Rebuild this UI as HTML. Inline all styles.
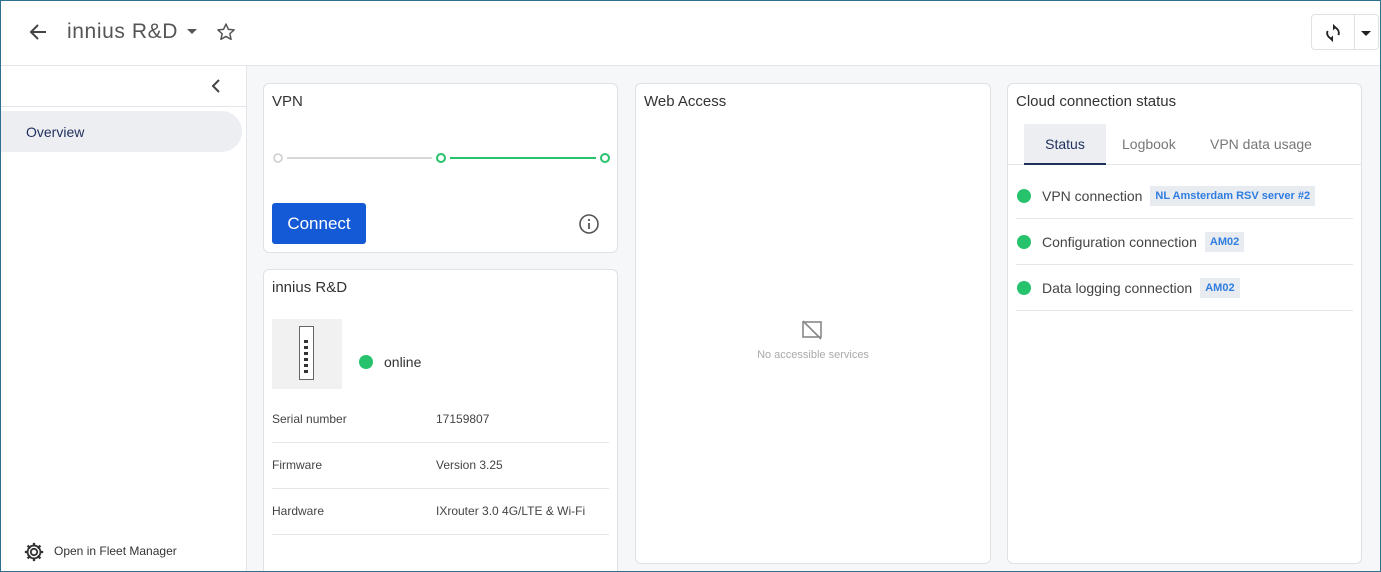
<!DOCTYPE html><html style="width:1381px;height:572px;overflow:hidden"><head><style>
*{box-sizing:border-box;margin:0;padding:0}
body{width:1381px;height:572px;overflow:hidden;font-family:"Liberation Sans",sans-serif;background:#fff;position:relative;color:#333}
.frame{position:absolute;inset:0;border:1px solid #2f6f8f;pointer-events:none;z-index:10}
.hdr{position:absolute;left:0;top:0;width:1381px;height:66px;border-bottom:1px solid #e3e5e8;background:#fff}
.side{position:absolute;left:0;top:66px;width:247px;height:506px;border-right:1px solid #e3e5e8;background:#fff}
.main{position:absolute;left:247px;top:66px;right:0;bottom:0;background:#f6f7f9}
.card{position:absolute;background:#fff;border:1px solid #dfe1e4;border-radius:6px}
.ct{position:absolute;left:8px;top:9px;font-size:15px;color:#333}
.row{position:absolute;left:8px;right:8px;height:46px;border-bottom:1px solid #e3e5e8;font-size:12px;color:#444}
.row span{position:absolute;top:8px}
.dot{display:inline-block;width:14px;height:14px;border-radius:50%;background:#27c26c}
.tag{background:#e8ebef;color:#2f7de1;font-size:11px;font-weight:bold;padding:4px 5px;margin-left:8px}
.srow{position:absolute;left:8px;right:8px;height:46px;border-bottom:1px solid #e3e5e8;display:flex;align-items:center;font-size:14px;color:#444}
</style></head><body>
<div class="hdr">
<svg style="position:absolute;left:28px;top:23px" width="20" height="18" viewBox="0 0 20 18"><path d="M18 9H3M10 2L3 9l7 7" stroke="#444" stroke-width="2" fill="none"/></svg>
<div style="position:absolute;left:67px;top:20px;font-size:21px;color:#555;letter-spacing:.6px">innius R&amp;D</div>
<svg style="position:absolute;left:187px;top:29px" width="10" height="6"><path d="M0 0h10L5 5z" fill="#555"/></svg>
<svg style="position:absolute;left:216px;top:22px" width="20" height="20" viewBox="0 0 24 24"><path d="M12 2.5l2.9 6.3 6.8.7-5.1 4.6 1.5 6.7L12 17.3l-6.1 3.5 1.5-6.7-5.1-4.6 6.8-.7z" stroke="#555" stroke-width="1.8" fill="none" stroke-linejoin="round"/></svg>
<div style="position:absolute;left:1311px;top:14px;width:68px;height:36px;border:1px solid #dfe1e4;border-radius:4px">
<div style="position:absolute;left:42px;top:0;bottom:0;border-left:1px solid #dfe1e4"></div>
<svg style="position:absolute;left:11px;top:8px" width="20" height="20" viewBox="0 0 24 24"><path d="M12 5a7 7 0 0 1 6.5 9.5M12 19a7 7 0 0 1-6.5-9.5" stroke="#222" stroke-width="2.2" fill="none"/><path d="M12 1l4 4-4 4zM12 23l-4-4 4-4z" fill="#222"/></svg>
<svg style="position:absolute;left:49px;top:16px" width="10" height="6"><path d="M0 0h10L5 5z" fill="#222"/></svg>
</div></div>
<div class="side">
<div style="position:absolute;left:0;right:0;top:0;height:41px;border-bottom:1px solid #e3e5e8"></div>
<svg style="position:absolute;left:211px;top:13px" width="10" height="14"><path d="M8 1L2 7l6 6" stroke="#444" stroke-width="2" fill="none"/></svg>
<div style="position:absolute;left:0;top:45px;width:242px;height:41px;background:#eceef2;border-radius:0 21px 21px 0"></div>
<div style="position:absolute;left:26px;top:58px;font-size:14px;color:#1f2f5c">Overview</div>
<svg style="position:absolute;left:23px;top:475px" width="22" height="22" viewBox="0 0 24 24"><circle cx="12" cy="12" r="3.5" stroke="#333" stroke-width="2" fill="none"/><path d="M12 2v4M12 18v4M2 12h4M18 12h4M5 5l3 3M16 16l3 3M19 5l-3 3M8 16l-3 3" stroke="#333" stroke-width="2.5"/><circle cx="12" cy="12" r="7" stroke="#333" stroke-width="2" fill="none"/></svg>
<div style="position:absolute;left:54px;top:478px;font-size:12px;color:#333">Open in Fleet Manager</div>
</div>
<div class="main"></div>
<div class="card" style="left:263px;top:83px;width:355px;height:170px">
<div class="ct">VPN</div>
<svg style="position:absolute;left:8px;top:67px" width="340" height="14"><circle cx="6" cy="7" r="4" stroke="#ccc" stroke-width="1.5" fill="#fff"/><path d="M15 7H160" stroke="#ccc" stroke-width="1.5"/><circle cx="169" cy="7" r="4" stroke="#27c26c" stroke-width="2" fill="#fff"/><path d="M178 7H324" stroke="#27c26c" stroke-width="2"/><circle cx="333" cy="7" r="4" stroke="#27c26c" stroke-width="2" fill="#fff"/></svg>
<div style="position:absolute;left:8px;top:119px;width:94px;height:41px;background:#1459d6;border-radius:3px;color:#fff;font-size:17px;text-align:center;line-height:41px">Connect</div>
<svg style="position:absolute;left:314px;top:129px" width="22" height="22" viewBox="0 0 22 22"><circle cx="11" cy="11" r="9" stroke="#555" stroke-width="1.6" fill="none"/><path d="M11 10v6" stroke="#555" stroke-width="1.8"/><circle cx="11" cy="7" r="1.1" fill="#555"/></svg>
</div>
<div class="card" style="left:263px;top:269px;width:355px;height:303px;border-bottom:none;border-radius:6px 6px 0 0">
<div class="ct">innius R&amp;D</div>
<div style="position:absolute;left:8px;top:49px;width:70px;height:70px;background:#f1f1f1"></div>
<div style="position:absolute;left:35px;top:56px;width:15px;height:54px;border:1.5px solid #666;background:#fff"></div>
<div style="position:absolute;left:40px;top:70px;width:4px;height:34px;background:repeating-linear-gradient(#333 0 3px,transparent 3px 6px)"></div>
<span class="dot" style="position:absolute;left:95px;top:85px"></span>
<div style="position:absolute;left:120px;top:84px;font-size:14px;color:#333">online</div>
<div class="row" style="top:127px"><span style="left:0;top:15px">Serial number</span><span style="left:164px;top:15px">17159807</span></div>
<div class="row" style="top:173px"><span style="left:0;top:15px">Firmware</span><span style="left:164px;top:15px">Version 3.25</span></div>
<div class="row" style="top:219px"><span style="left:0;top:15px">Hardware</span><span style="left:164px;top:15px">IXrouter 3.0 4G/LTE &amp; Wi-Fi</span></div>
</div>
<div class="card" style="left:635px;top:83px;width:356px;height:481px">
<div class="ct">Web Access</div>
<svg style="position:absolute;left:165px;top:235px" width="22" height="22" viewBox="0 0 22 22"><rect x="2" y="3" width="18" height="15" stroke="#888" stroke-width="1.6" fill="none"/><path d="M2 2l18 18" stroke="#888" stroke-width="1.6"/></svg>
<div style="position:absolute;left:0;right:0;top:265px;text-align:center;font-size:11px;color:#aaa">No accessible services</div>
</div>
<div class="card" style="left:1007px;top:83px;width:355px;height:481px">
<div class="ct">Cloud connection status</div>
<div style="position:absolute;left:0;right:0;top:80px;border-bottom:1px solid #e3e5e8"></div>
<div style="position:absolute;left:16px;top:40px;width:82px;height:41px;background:#eceef2;border-bottom:2px solid #1f2f5c;text-align:center;line-height:40px;font-size:14px;color:#1f2f5c">Status</div>
<div style="position:absolute;left:114px;top:52px;font-size:14px;color:#777">Logbook</div>
<div style="position:absolute;left:202px;top:52px;font-size:14px;color:#777">VPN data usage</div>
<div class="srow" style="top:89px"><span class="dot" style="margin-left:1px;margin-right:11px"></span>VPN connection<span class="tag">NL Amsterdam RSV server #2</span></div>
<div class="srow" style="top:135px"><span class="dot" style="margin-left:1px;margin-right:11px"></span>Configuration connection<span class="tag">AM02</span></div>
<div class="srow" style="top:181px"><span class="dot" style="margin-left:1px;margin-right:11px"></span>Data logging connection<span class="tag">AM02</span></div>
</div>
<div class="frame"></div>
</body></html>
